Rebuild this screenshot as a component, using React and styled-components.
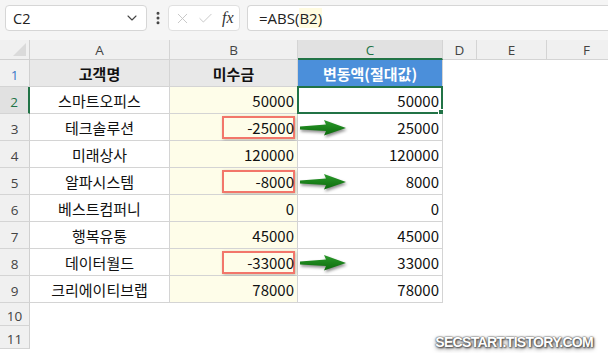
import styled, { createGlobalStyle } from 'styled-components'
import { ChevronDown, EllipsisVertical, X, Check } from 'lucide-react'

const GlobalStyle = createGlobalStyle`
body {
  margin: 0;
  background: #ffffff;
  font-family: "Noto Sans CJK KR", "Noto Sans", sans-serif;
}
* { box-sizing: border-box; }`

const Page = styled.div`
width: 608px;
height: 353px;
overflow: hidden;
position: relative;
background: #ffffff;`

const Toolbar = styled.div`
height: 40px;
display: flex;
align-items: flex-start;
padding: 5px 0 0 5px;
background: #f5f5f5;`

const NameBox = styled.div`
width: 142px;
height: 26px;
background: #fff;
border: 1px solid #d6d6d6;
border-radius: 4px;
display: flex;
align-items: center;
justify-content: space-between;
padding: 0 6px 0 7px;
font-family: "Open Sans", "Noto Sans", sans-serif;
font-size: 14.5px;
color: #222;`

const Dots = styled.div`
width: 21px;
height: 26px;
display: flex;
align-items: center;
justify-content: center;
color: #444;`

const FxBox = styled.div`
width: 72px;
height: 26px;
background: #fff;
border: 1px solid #e0e0e0;
border-radius: 4px;
display: flex;
align-items: center;
padding: 0 4px 0 5px;
gap: 6px;
color: #c4c4c4;`

const Fx = styled.span`
font-family: "Liberation Serif", serif;
font-style: italic;
font-size: 16px;
color: #333;
margin-left: 2px;`

const FormulaBar = styled.div`
flex: 1;
height: 26px;
margin-left: 7px;
background: #fff;
border: 1px solid #d6d6d6;
border-right: none;
border-radius: 4px 0 0 4px;
display: flex;
align-items: center;
padding-left: 11px;
font-family: "Open Sans", "Noto Sans", sans-serif;
font-size: 15px;
color: #222;`

const Ref = styled.span`
background: #fffbe0;`

const Sheet = styled.div`
display: grid;
grid-template-columns: 30px 140px 128px 145px 34px 70px 80px;
grid-template-rows: 20px repeat(9, 27px) 23px 23px;`

const Corner = styled.div`
background: #f0f0f0;
border-right: 1px solid #d0d0d0;
border-bottom: 1px solid #d0d0d0;
position: relative;
&::after {
  content: "";
  position: absolute;
  right: 3px;
  bottom: 3px;
  border-left: 13px solid transparent;
  border-bottom: 13px solid #dadada;
}`

const ColHead = styled.div`
background: ${p => (p.$selected ? '#e1e1e1' : '#f0f0f0')};
border-right: 1px solid #d4d4d4;
border-bottom: ${p => (p.$selected ? '2px solid #217346' : '1px solid #d4d4d4')};
color: ${p => (p.$selected ? '#217346' : '#444')};
font-family: "Open Sans", "Noto Sans", sans-serif;
font-size: 13.5px;
display: flex;
align-items: center;
justify-content: center;
padding-top: ${p => (p.$selected ? '1px' : '0')};`

const RowHead = styled.div`
background: ${p => (p.$selected ? '#e1e1e1' : '#f0f0f0')};
border-right: ${p => (p.$selected ? '2px solid #217346' : '1px solid #d0d0d0')};
border-bottom: 1px solid #d4d4d4;
color: ${p => p.$color || '#444'};
font-family: "Open Sans", "Noto Sans", sans-serif;
font-size: 13.5px;
display: flex;
align-items: center;
justify-content: center;
padding-top: 4px;`

const Cell = styled.div`
position: relative;
background: ${p => p.$bg || '#ffffff'};
border-right: ${p => (p.$lines ? '1px solid #d4d4d4' : 'none')};
border-bottom: ${p => (p.$lines ? '1px solid #d4d4d4' : 'none')};
color: ${p => p.$color || '#111'};
font-weight: ${p => (p.$bold ? 700 : 400)};
font-size: 15px;
line-height: 1;
display: flex;
align-items: center;
justify-content: ${p => p.$align || 'center'};
padding: 0 3px 0 3px;
white-space: nowrap;`

const Mark = styled.div`
position: absolute;
left: 52px;
right: 2px;
top: 2px;
bottom: 1px;
border: 2px solid #f2766a;
box-shadow: 1px 1px 3px rgba(0, 0, 0, 0.25);`

const Selection = styled.div`
position: absolute;
left: -1px;
top: -1px;
right: -1px;
bottom: -1px;
border: 2px solid #217346;
&::after {
  content: "";
  position: absolute;
  right: -4px;
  bottom: -4px;
  width: 5px;
  height: 5px;
  background: #217346;
  border: 1px solid #fff;
}`

const ArrowSvg = styled.svg`
position: absolute;
left: 2px;
top: 4px;
filter: drop-shadow(1px 2px 1.5px rgba(0, 0, 0, 0.45));`

const Watermark = styled.div`
position: absolute;
right: 15px;
bottom: 3px;
font-family: "Liberation Sans", sans-serif;
font-weight: 700;
font-size: 14px;
letter-spacing: -0.7px;
color: #ffffff;
text-shadow: 0 0 1px #555, 0 0 2px #555, 1px 1px 2px #444, 0 2px 4px rgba(0,0,0,0.5);`

function Arrow() {
  return (
    <ArrowSvg width="50" height="20" viewBox="0 0 50 20">
      <defs>
        <linearGradient id="ag" x1="0" y1="0" x2="0" y2="1">
          <stop offset="0" stopColor="#2a9a2a" />
          <stop offset="1" stopColor="#0c6a0c" />
        </linearGradient>
      </defs>
      <path d="M0 8.5 L26 6.5 L24 2 L46 10 L24 17.5 L26 13 L0 11.5 Z" fill="url(#ag)" />
    </ArrowSvg>
  )
}

const rows = [
  ['스마트오피스', 50000],
  ['테크솔루션', -25000],
  ['미래상사', 120000],
  ['알파시스템', -8000],
  ['베스트컴퍼니', 0],
  ['행복유통', 45000],
  ['데이터월드', -33000],
  ['크리에이티브랩', 78000],
]

const cols = ['A', 'B', 'C', 'D', 'E', 'F']

export default function App() {
  return (
    <Page>
      <GlobalStyle />
      <Toolbar>
        <NameBox>
          <span>C2</span>
          <ChevronDown size={16} strokeWidth={1.6} color="#444" />
        </NameBox>
        <Dots>
          <EllipsisVertical size={16} strokeWidth={2.5} />
        </Dots>
        <FxBox>
          <X size={17} strokeWidth={1.3} />
          <Check size={17} strokeWidth={1.3} />
          <Fx>fx</Fx>
        </FxBox>
        <FormulaBar>
          =ABS(<Ref>B2)</Ref>
        </FormulaBar>
      </Toolbar>

      <Sheet>
        <Corner />
        {cols.map(c => (
          <ColHead key={c} $selected={c === 'C'}>{c}</ColHead>
        ))}

        <RowHead $color="#3b78c8">1</RowHead>
        <Cell $lines $bg="#e8e8e8" $bold>고객명</Cell>
        <Cell $lines $bg="#e8e8e8" $bold>미수금</Cell>
        <Cell $lines $bg="#4b8fda" $bold $color="#ffffff">변동액(절대값)</Cell>
        <Cell /><Cell /><Cell />

        {rows.map(([name, amount], i) => {
          const r = i + 2
          const neg = amount < 0
          return [
            <RowHead key={`h${r}`} $selected={r === 2} $color={r === 2 ? '#217346' : undefined}>{r}</RowHead>,
            <Cell key={`a${r}`} $lines>{name}</Cell>,
            <Cell key={`b${r}`} $lines $bg="#fefde9" $align="flex-end">
              {neg && <Mark />}
              <span style={{ position: 'relative' }}>{amount}</span>
            </Cell>,
            <Cell key={`c${r}`} $lines $align="flex-end">
              {r === 2 && <Selection />}
              {neg && <Arrow />}
              {Math.abs(amount)}
            </Cell>,
            <Cell key={`d${r}`} />,
            <Cell key={`e${r}`} />,
            <Cell key={`f${r}`} />,
          ]
        })}

        {[10, 11].map(r => [
          <RowHead key={`h${r}`}>{r}</RowHead>,
          <Cell key={`a${r}`} />,
          <Cell key={`b${r}`} />,
          <Cell key={`c${r}`} />,
          <Cell key={`d${r}`} />,
          <Cell key={`e${r}`} />,
          <Cell key={`f${r}`} />,
        ])}
      </Sheet>

      <Watermark>SECSTART.TISTORY.COM</Watermark>
    </Page>
  )
}
